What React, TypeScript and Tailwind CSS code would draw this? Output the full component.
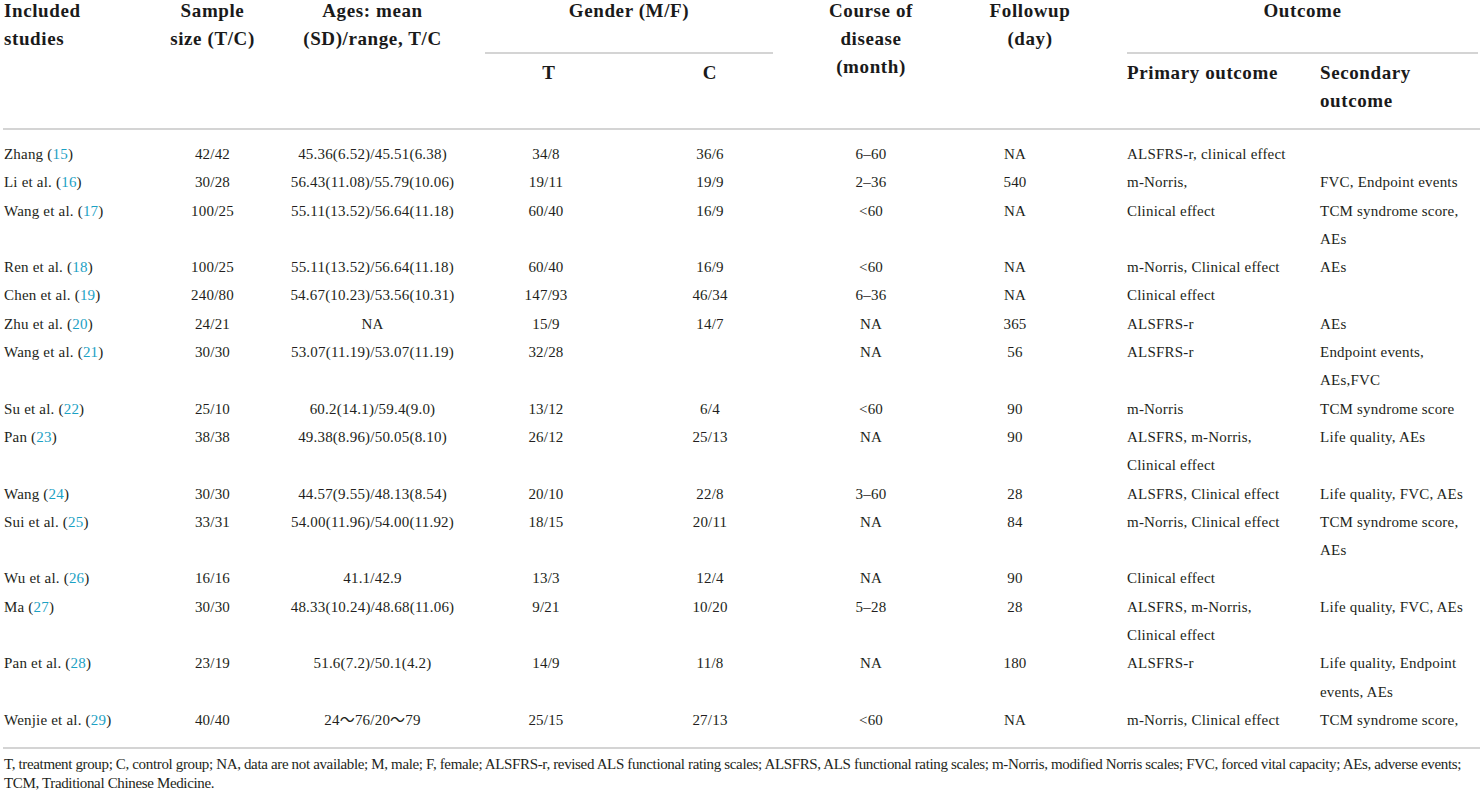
const rows: {
  study: string;
  ref: string;
  sample: string;
  ages: string;
  t: string;
  c: string;
  course: string;
  followup: string;
  primary: string[];
  secondary: string[];
}[] = [
  { study: "Zhang", ref: "15", sample: "42/42", ages: "45.36(6.52)/45.51(6.38)", t: "34/8", c: "36/6", course: "6–60", followup: "NA", primary: ["ALSFRS-r, clinical effect"], secondary: [] },
  { study: "Li et al.", ref: "16", sample: "30/28", ages: "56.43(11.08)/55.79(10.06)", t: "19/11", c: "19/9", course: "2–36", followup: "540", primary: ["m-Norris,"], secondary: ["FVC, Endpoint events"] },
  { study: "Wang et al.", ref: "17", sample: "100/25", ages: "55.11(13.52)/56.64(11.18)", t: "60/40", c: "16/9", course: "<60", followup: "NA", primary: ["Clinical effect"], secondary: ["TCM syndrome score,", "AEs"] },
  { study: "Ren et al.", ref: "18", sample: "100/25", ages: "55.11(13.52)/56.64(11.18)", t: "60/40", c: "16/9", course: "<60", followup: "NA", primary: ["m-Norris, Clinical effect"], secondary: ["AEs"] },
  { study: "Chen et al.", ref: "19", sample: "240/80", ages: "54.67(10.23)/53.56(10.31)", t: "147/93", c: "46/34", course: "6–36", followup: "NA", primary: ["Clinical effect"], secondary: [] },
  { study: "Zhu et al.", ref: "20", sample: "24/21", ages: "NA", t: "15/9", c: "14/7", course: "NA", followup: "365", primary: ["ALSFRS-r"], secondary: ["AEs"] },
  { study: "Wang et al.", ref: "21", sample: "30/30", ages: "53.07(11.19)/53.07(11.19)", t: "32/28", c: "", course: "NA", followup: "56", primary: ["ALSFRS-r"], secondary: ["Endpoint events,", "AEs,FVC"] },
  { study: "Su et al.", ref: "22", sample: "25/10", ages: "60.2(14.1)/59.4(9.0)", t: "13/12", c: "6/4", course: "<60", followup: "90", primary: ["m-Norris"], secondary: ["TCM syndrome score"] },
  { study: "Pan", ref: "23", sample: "38/38", ages: "49.38(8.96)/50.05(8.10)", t: "26/12", c: "25/13", course: "NA", followup: "90", primary: ["ALSFRS, m-Norris,", "Clinical effect"], secondary: ["Life quality, AEs"] },
  { study: "Wang", ref: "24", sample: "30/30", ages: "44.57(9.55)/48.13(8.54)", t: "20/10", c: "22/8", course: "3–60", followup: "28", primary: ["ALSFRS, Clinical effect"], secondary: ["Life quality, FVC, AEs"] },
  { study: "Sui et al.", ref: "25", sample: "33/31", ages: "54.00(11.96)/54.00(11.92)", t: "18/15", c: "20/11", course: "NA", followup: "84", primary: ["m-Norris, Clinical effect"], secondary: ["TCM syndrome score,", "AEs"] },
  { study: "Wu et al.", ref: "26", sample: "16/16", ages: "41.1/42.9", t: "13/3", c: "12/4", course: "NA", followup: "90", primary: ["Clinical effect"], secondary: [] },
  { study: "Ma", ref: "27", sample: "30/30", ages: "48.33(10.24)/48.68(11.06)", t: "9/21", c: "10/20", course: "5–28", followup: "28", primary: ["ALSFRS, m-Norris,", "Clinical effect"], secondary: ["Life quality, FVC, AEs"] },
  { study: "Pan et al.", ref: "28", sample: "23/19", ages: "51.6(7.2)/50.1(4.2)", t: "14/9", c: "11/8", course: "NA", followup: "180", primary: ["ALSFRS-r"], secondary: ["Life quality, Endpoint", "events, AEs"] },
  { study: "Wenjie et al.", ref: "29", sample: "40/40", ages: "24～76/20～79", t: "25/15", c: "27/13", course: "<60", followup: "NA", primary: ["m-Norris, Clinical effect"], secondary: ["TCM syndrome score,"] },
];

function Lines({ items }: { items: string[] }) {
  return (
    <>
      {items.map((s, i) => (
        <div key={i}>{s}</div>
      ))}
    </>
  );
}

export default function App() {
  return (
    <main className="min-h-screen bg-white font-['Liberation_Serif','Noto_Sans_CJK_SC',serif] text-[#231f20] overflow-hidden">
      <table className="table-fixed border-collapse ml-[3px] -mt-[3px] w-[1477px]">
        <colgroup>
          <col className="w-[142px]" />
          <col className="w-[135px]" />
          <col className="w-[185px]" />
          <col className="w-[168px]" />
          <col className="w-[154px]" />
          <col className="w-[168px]" />
          <col className="w-[150px]" />
          <col className="w-[195px]" />
          <col className="w-[180px]" />
        </colgroup>

        {/* two-level header */}
        <thead className="text-[19px] font-bold leading-[28px] tracking-[0.6px] text-[#1a1a1a]">
          <tr>
            <th rowSpan={2} className="align-top text-left pl-[1px] font-bold">
              Included
              <br />
              studies
            </th>
            <th rowSpan={2} className="align-top text-center font-bold">
              Sample
              <br />
              size (T/C)
            </th>
            <th rowSpan={2} className="align-top text-center font-bold">
              Ages: mean
              <br />
              (SD)/range, T/C
            </th>
            <th colSpan={2} className="align-top p-0 font-bold">
              <div className="ml-[20px] mr-[14px] pb-[27px] border-b-2 border-[#d4d4d4] text-center">Gender (M/F)</div>
            </th>
            <th rowSpan={2} className="align-top text-center font-bold">
              Course of
              <br />
              disease
              <br />
              (month)
            </th>
            <th rowSpan={2} className="align-top text-center font-bold">
              Followup
              <br />
              (day)
            </th>
            <th colSpan={2} className="align-top p-0 font-bold">
              <div className="ml-[22px] mr-[2px] pb-[27px] border-b-2 border-[#d4d4d4] text-center">Outcome</div>
            </th>
          </tr>
          <tr className="border-b-2 border-[#d4d4d4]">
            <th className="align-top text-center pt-[5px] pb-[13px] font-bold">T</th>
            <th className="align-top text-center pt-[5px] pb-[13px] font-bold">C</th>
            <th className="align-top text-left pl-[22px] pt-[5px] pb-[13px] font-bold">Primary outcome</th>
            <th className="align-top text-left pl-[20px] pt-[5px] pb-[13px] font-bold">
              Secondary
              <br />
              outcome
            </th>
          </tr>
        </thead>

        <tbody className="text-[15px] leading-[28.3px] tracking-[0.2px] whitespace-nowrap">
          {rows.map((r, i) => {
            const pad = i === 0 ? "pt-[10px]" : i === rows.length - 1 ? "pb-[13px]" : "";
            return (
              <tr key={i} className={i === rows.length - 1 ? "border-b-2 border-[#d4d4d4]" : ""}>
                <td className={`align-top text-left pl-[1px] ${pad}`}>
                  {r.study} (<span className="text-[#1ba1c4]">{r.ref}</span>)
                </td>
                <td className={`align-top text-center ${pad}`}>{r.sample}</td>
                <td className={`align-top text-center ${pad}`}>{r.ages}</td>
                <td className={`align-top text-center pr-[6px] ${pad}`}>{r.t}</td>
                <td className={`align-top text-center ${pad}`}>{r.c}</td>
                <td className={`align-top text-center ${pad}`}>{r.course}</td>
                <td className={`align-top text-center pr-[30px] ${pad}`}>{r.followup}</td>
                <td className={`align-top text-left pl-[22px] ${pad}`}>
                  <Lines items={r.primary} />
                </td>
                <td className={`align-top text-left pl-[20px] ${pad}`}>
                  <Lines items={r.secondary} />
                </td>
              </tr>
            );
          })}
        </tbody>
      </table>

      <p className="ml-[4px] mt-[6px] text-[15px] leading-[19px] tracking-[-0.35px] whitespace-nowrap">
        T, treatment group; C, control group; NA, data are not available; M, male; F, female; ALSFRS-r, revised ALS functional rating scales; ALSFRS, ALS functional rating scales; m-Norris, modified Norris scales; FVC, forced vital capacity; AEs, adverse events;
        <br />
        TCM, Traditional Chinese Medicine.
      </p>
    </main>
  );
}
